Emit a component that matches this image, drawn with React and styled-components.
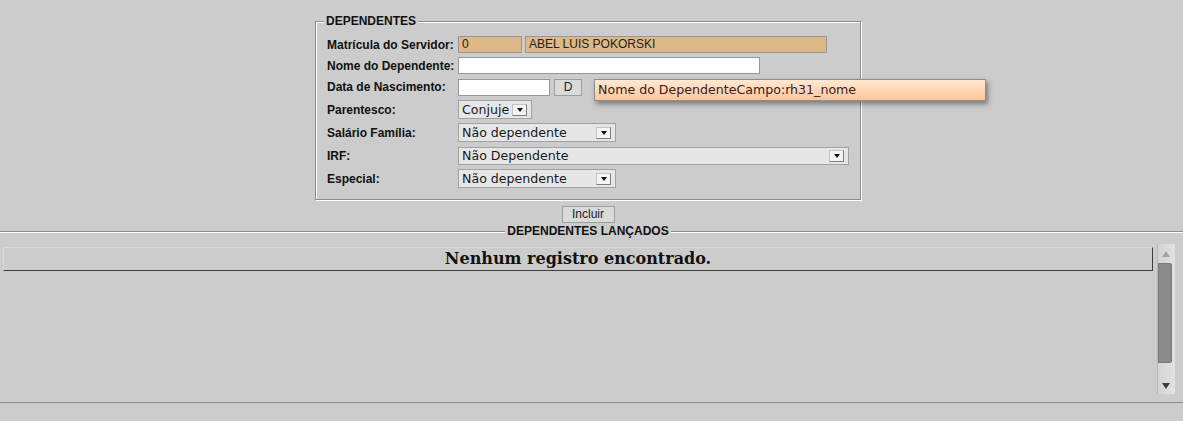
import React from 'react';
import styled, { createGlobalStyle } from 'styled-components';

const Global = createGlobalStyle`
  html, body {
    margin: 0;
    padding: 0;
    background: #cccccc;
    font-family: 'Liberation Sans', Arial, sans-serif;
    color: #111;
  }
`;

const Top = styled.div`
  position: relative;
  display: flex;
  flex-direction: column;
  align-items: center;
  padding: 14px 7px 0 0;
`;

const Box = styled.fieldset`
  box-sizing: border-box;
  width: 546px;
  margin: 0;
  padding: 6px 10px 9px 11px;
  border: 1px solid #8c8c8c;
  box-shadow: inset 1px 1px 0 #fff, 1px 1px 0 #fff;
`;

const Legend = styled.legend`
  padding: 0 2px;
  margin-left: -3px;
  font-size: 12px;
  line-height: 14px;
  font-weight: bold;
  background: #cccccc;
`;

const Row = styled.div`
  display: flex;
  align-items: center;
  height: ${p => p.$h}px;
`;

const Label = styled.div`
  width: 131px;
  flex: none;
  font-size: 12px;
  font-weight: bold;
  color: #111;
`;

const Field = styled.div`
  box-sizing: border-box;
  width: ${p => p.$w}px;
  height: 17px;
  margin-right: ${p => p.$mr || 0}px;
  padding: 0 3px;
  border: 1px solid #979797;
  background: ${p => (p.$ro ? '#deb887' : '#ffffff')};
  font-size: 12px;
  line-height: 15px;
  color: #222;
  white-space: nowrap;
  overflow: hidden;
`;

const Btn = styled.div`
  box-sizing: border-box;
  width: ${p => p.$w}px;
  height: 17px;
  margin-left: ${p => p.$ml || 0}px;
  border: 1px solid #9d9d9d;
  background: #dadada;
  font-size: 12px;
  line-height: 15px;
  text-align: center;
  color: #222;
`;

const Select = styled.div`
  box-sizing: border-box;
  width: ${p => p.$w}px;
  height: ${p => p.$h || 19}px;
  display: flex;
  align-items: center;
  justify-content: space-between;
  padding: 0 4px 0 3px;
  border: 1px solid #a2a2a2;
  background: #e6e6e6;
  font-family: 'DejaVu Sans', sans-serif;
  font-size: 12.6px;
  color: #1a1a1a;
  white-space: nowrap;
`;

const Arrow = styled.div`
  box-sizing: border-box;
  flex: none;
  width: 15px;
  height: 12px;
  display: flex;
  align-items: center;
  justify-content: center;
  background: #f4f4f4;
  border: 1px solid;
  border-color: #c4c4c4 #7e7e7e #7e7e7e #c4c4c4;
`;

const Caret = () => (
  <svg width="6" height="4" viewBox="0 0 6 4">
    <path d="M0 0h6L3 4z" fill="#111" />
  </svg>
);

const Tooltip = styled.div`
  position: absolute;
  left: 594px;
  top: 79px;
  box-sizing: border-box;
  width: 392px;
  height: 22px;
  padding: 0 4px 0 3px;
  border: 1px solid #8e8e8e;
  background: linear-gradient(#ffe9d3, #ffc699);
  box-shadow: 2px 3px 5px rgba(0, 0, 0, 0.4);
  font-family: 'DejaVu Sans', sans-serif;
  font-size: 12.6px;
  line-height: 20px;
  color: #3a2020;
  white-space: nowrap;
`;

const Incluir = styled(Btn)`
  margin-top: 6px;
`;

const Results = styled.fieldset`
  margin: 1px 0 0 0;
  padding: 6px 7px 8px 0;
  min-width: 0;
  border: none;
  border-top: 1px solid #8c8c8c;
  border-bottom: 1px solid #8c8c8c;
  box-shadow: inset 0 1px 0 #fff, 0 1px 0 #fff;
`;

const ResultsLegend = styled(Legend)`
  margin: 0 auto;
`;

const ListRow = styled.div`
  display: flex;
  gap: 4px;
  padding-left: 3px;
  height: 150px;
`;

const List = styled.div`
  width: 1150px;
  padding-top: 3px;
`;

const EmptyHeader = styled.div`
  box-sizing: border-box;
  height: 24px;
  border: 1px solid;
  border-color: #dadada #3e3e3e #3e3e3e #dadada;
  font-family: 'DejaVu Serif', serif;
  font-weight: bold;
  font-size: 16px;
  line-height: 22px;
  text-align: center;
  color: #111;
`;

const Scrollbar = styled.div`
  box-sizing: border-box;
  width: 18px;
  display: flex;
  flex-direction: column;
  background: linear-gradient(90deg, #d4d4d4, #e2e2e2);
  border-left: 1px solid #b8b8b8;
`;

const ScrollBtn = styled.div`
  height: 17px;
  display: flex;
  align-items: ${p => (p.$up ? 'flex-end' : 'center')};
  justify-content: center;
  padding-right: 1px;
  padding-bottom: ${p => (p.$up ? 4 : 0)}px;
  box-sizing: border-box;
`;

const Track = styled.div`
  flex: 1;
`;

const Thumb = styled.div`
  box-sizing: border-box;
  width: 14px;
  height: 100px;
  margin-top: 2px;
  background: #8b8b8b;
  border: 1px solid #7a7a7a;
  border-radius: 0 2px 2px 0;
`;

const Tri = ({ up, color }) => (
  <svg width="8" height="6" viewBox="0 0 8 6">
    <path d={up ? 'M4 0L8 6H0z' : 'M0 0h8L4 6z'} fill={color} />
  </svg>
);

export default function App() {
  return (
    <>
      <Global />
      <Top>
        <Box>
          <Legend>DEPENDENTES</Legend>
          <Row $h={21}>
            <Label>Matrícula do Servidor:</Label>
            <Field $w={64} $ro $mr={3}>0</Field>
            <Field $w={302} $ro>ABEL LUIS POKORSKI</Field>
          </Row>
          <Row $h={21}>
            <Label>Nome do Dependente:</Label>
            <Field $w={302} />
          </Row>
          <Row $h={22}>
            <Label>Data de Nascimento:</Label>
            <Field $w={92} />
            <Btn $w={28} $ml={4}>D</Btn>
          </Row>
          <Row $h={23}>
            <Label>Parentesco:</Label>
            <Select $w={74}>Conjuje<Arrow><Caret /></Arrow></Select>
          </Row>
          <Row $h={23}>
            <Label>Salário Família:</Label>
            <Select $w={158}>Não dependente<Arrow><Caret /></Arrow></Select>
          </Row>
          <Row $h={23}>
            <Label>IRF:</Label>
            <Select $w={391} $h={18}>Não Dependente<Arrow><Caret /></Arrow></Select>
          </Row>
          <Row $h={23}>
            <Label>Especial:</Label>
            <Select $w={158}>Não dependente<Arrow><Caret /></Arrow></Select>
          </Row>
        </Box>
        <Incluir $w={53}>Incluir</Incluir>
        <Tooltip>Nome do DependenteCampo:rh31_nome</Tooltip>
      </Top>
      <Results>
        <ResultsLegend>DEPENDENTES LANÇADOS</ResultsLegend>
        <ListRow>
          <List>
            <EmptyHeader>Nenhum registro encontrado.</EmptyHeader>
          </List>
          <Scrollbar>
            <ScrollBtn $up><Tri up color="#a3a3a3" /></ScrollBtn>
            <Track><Thumb /></Track>
            <ScrollBtn><Tri color="#3c3c3c" /></ScrollBtn>
          </Scrollbar>
        </ListRow>
      </Results>
    </>
  );
}
